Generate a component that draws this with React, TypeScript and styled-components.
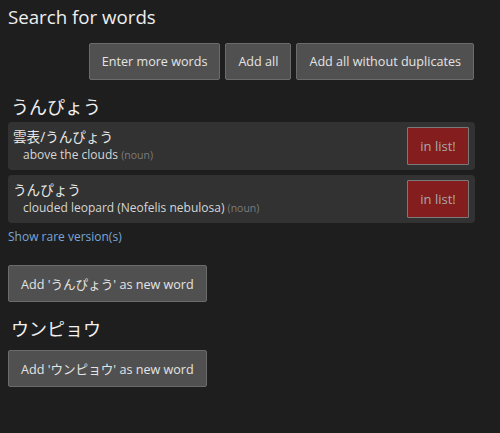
import styled, { createGlobalStyle } from "styled-components";

const GlobalStyle = createGlobalStyle`
  html, body {
    margin: 0;
    padding: 0;
    background: #1e1e1e;
  }
  body {
    font-family: "Open Sans", "Noto Sans CJK JP", sans-serif;
    color: #e6e6e6;
  }
`;

const results = [
  {
    title: "雲表/うんぴょう",
    meaning: "above the clouds",
    kind: "noun",
  },
  {
    title: "うんぴょう",
    meaning: "clouded leopard (Neofelis nebulosa)",
    kind: "noun",
  },
];

const App = () => {
  return (
    <Page>
      <GlobalStyle />
      <Title>Search for words</Title>
      <Toolbar>
        <Button>Enter more words</Button>
        <Button>Add all</Button>
        <Button>Add all without duplicates</Button>
      </Toolbar>

      <Heading>うんぴょう</Heading>
      <ResultList>
        {results.map((r, i) => (
          <Card key={i}>
            <CardText>
              <Reading>{r.title}</Reading>
              <Meaning>
                {r.meaning} <Kind>({r.kind})</Kind>
              </Meaning>
            </CardText>
            <InListButton>in list!</InListButton>
          </Card>
        ))}
      </ResultList>
      <RareLink href="#">Show rare version(s)</RareLink>
      <AddRow>
        <Button>Add 'うんぴょう' as new word</Button>
      </AddRow>

      <Heading>ウンピョウ</Heading>
      <AddRow>
        <Button>Add 'ウンピョウ' as new word</Button>
      </AddRow>
    </Page>
  );
};

const Page = styled.div`
  padding: 4px 25px 20px 8px;
`;

const Title = styled.h1`
  margin: 0;
  font-size: 18.7px;
  font-weight: 400;
  line-height: 26px;
  color: #eeeeee;
`;

const Toolbar = styled.div`
  display: flex;
  justify-content: flex-end;
  gap: 5px;
  margin-top: 13px;
  padding-right: 1px;
`;

const Button = styled.button`
  height: 37px;
  padding: 0 12px;
  background: #505050;
  border: 1px solid #6b6b6b;
  border-radius: 2px;
  color: #e4e4e4;
  font-family: "Open Sans", "Noto Sans CJK JP", sans-serif;
  font-size: 12.6px;
  cursor: pointer;
`;

const Heading = styled.h2`
  margin: 14px 0 0 3px;
  font-size: 18px;
  font-weight: 400;
  line-height: 26px;
  color: #f0f0f0;
`;

const ResultList = styled.div`
  display: flex;
  flex-direction: column;
  gap: 5px;
  margin-top: 2px;
`;

const Card = styled.div`
  display: flex;
  align-items: center;
  justify-content: space-between;
  height: 48px;
  padding: 0 6px 0 5px;
  background: #313231;
  border-radius: 4px;
`;

const CardText = styled.div`
  display: flex;
  flex-direction: column;
`;

const Reading = styled.div`
  font-size: 13.6px;
  line-height: 18px;
  color: #e8e8e8;
`;

const Meaning = styled.div`
  margin-left: 10px;
  font-size: 12px;
  line-height: 17px;
  color: #d6d6d6;
`;

const Kind = styled.span`
  font-size: 10.5px;
  color: #7c7c7c;
`;

const InListButton = styled.button`
  width: 62px;
  height: 38px;
  background: #841d1d;
  border: 1px solid #7a7a7a;
  border-radius: 1px;
  color: #a9a9a9;
  font-family: "Open Sans", sans-serif;
  font-size: 13px;
`;

const RareLink = styled.a`
  display: block;
  margin-top: 6px;
  font-size: 12px;
  line-height: 16px;
  color: #7aa6d6;
  text-decoration: none;
`;

const AddRow = styled.div`
  display: flex;
  margin-top: 20px;

  ${Heading} + & {
    margin-top: 8px;
  }
`;

export default App;
